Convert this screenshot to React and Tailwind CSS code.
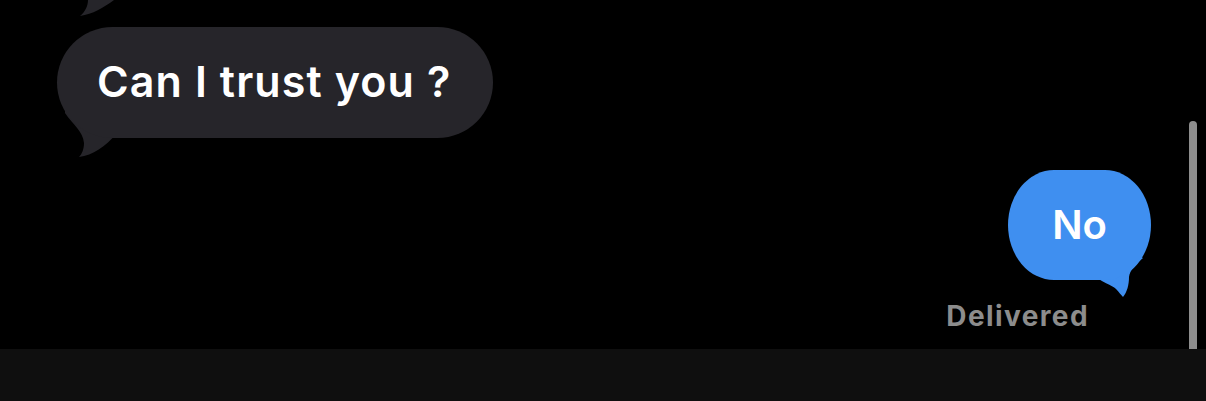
import React from 'react';

const font = { fontFamily: 'Inter, "Liberation Sans", sans-serif' };

const App = () => {
  return (
    <div className="flex h-[401px] w-[1206px] flex-col bg-black" style={font}>
      {/* Messages */}
      <div className="relative flex h-[349px] flex-col overflow-hidden">
        {/* tail of previous bubble */}
        <svg className="absolute left-0 top-0" width="130" height="30" viewBox="0 0 130 30">
          <path d="M88 0 C88 6 85 12 80 16 C93 14 103 8 114 0 Z" fill="#26252a" />
        </svg>

        {/* incoming */}
        <div className="ml-[57px] mt-[27px] flex">
          <div className="relative">
            <svg
              className="absolute left-0 top-0 overflow-visible"
              width="70"
              height="135"
              viewBox="0 0 70 135"
            >
              <path
                d="M8 60 L8 86 C16 98 26 104 27 116 C27 122 25 127 22 130 C36 128 48 120 60 106 L60 60 Z"
                fill="#26252a"
              />
            </svg>
            <div className="relative flex h-[111px] w-[436px] items-center rounded-full bg-[#26252a] pl-[40px] pb-[2px] text-[43px] font-semibold leading-none tracking-[1.1px] text-white">
              Can I trust you ?
            </div>
          </div>
        </div>

        {/* outgoing */}
        <div className="mr-[55px] mt-[32px] flex flex-col items-end">
          <div className="relative">
            <svg
              className="absolute left-0 top-0 overflow-visible"
              width="143"
              height="130"
              viewBox="0 0 143 130"
            >
              <path
                d="M80 102 C95 113 104 115 108 119 C111 122 113 125 115 127 C119 122 121 115 121 107 C122 100 127 95 135 88 L100 70 Z"
                fill="#3f8ff0"
              />
            </svg>
            <div className="relative flex h-[110px] w-[143px] items-center justify-center rounded-[46px/55px] bg-[#3f8ff0] pb-[1px] text-[40px] font-semibold leading-none text-white">
              No
            </div>
          </div>
          <div className="mr-[62px] mt-[22px] text-[28px] font-bold leading-none tracking-[1.4px] text-[#8c8c8c]">
            Delivered
          </div>
        </div>

        {/* scrollbar */}
        <div className="absolute bottom-0 left-[1189px] top-[121px] w-[8px] rounded-t-full bg-[#8e8e8e]" />
      </div>

      {/* input bar */}
      <div className="h-[52px] bg-[#0f0f0f]" />
    </div>
  );
};

export default App;
